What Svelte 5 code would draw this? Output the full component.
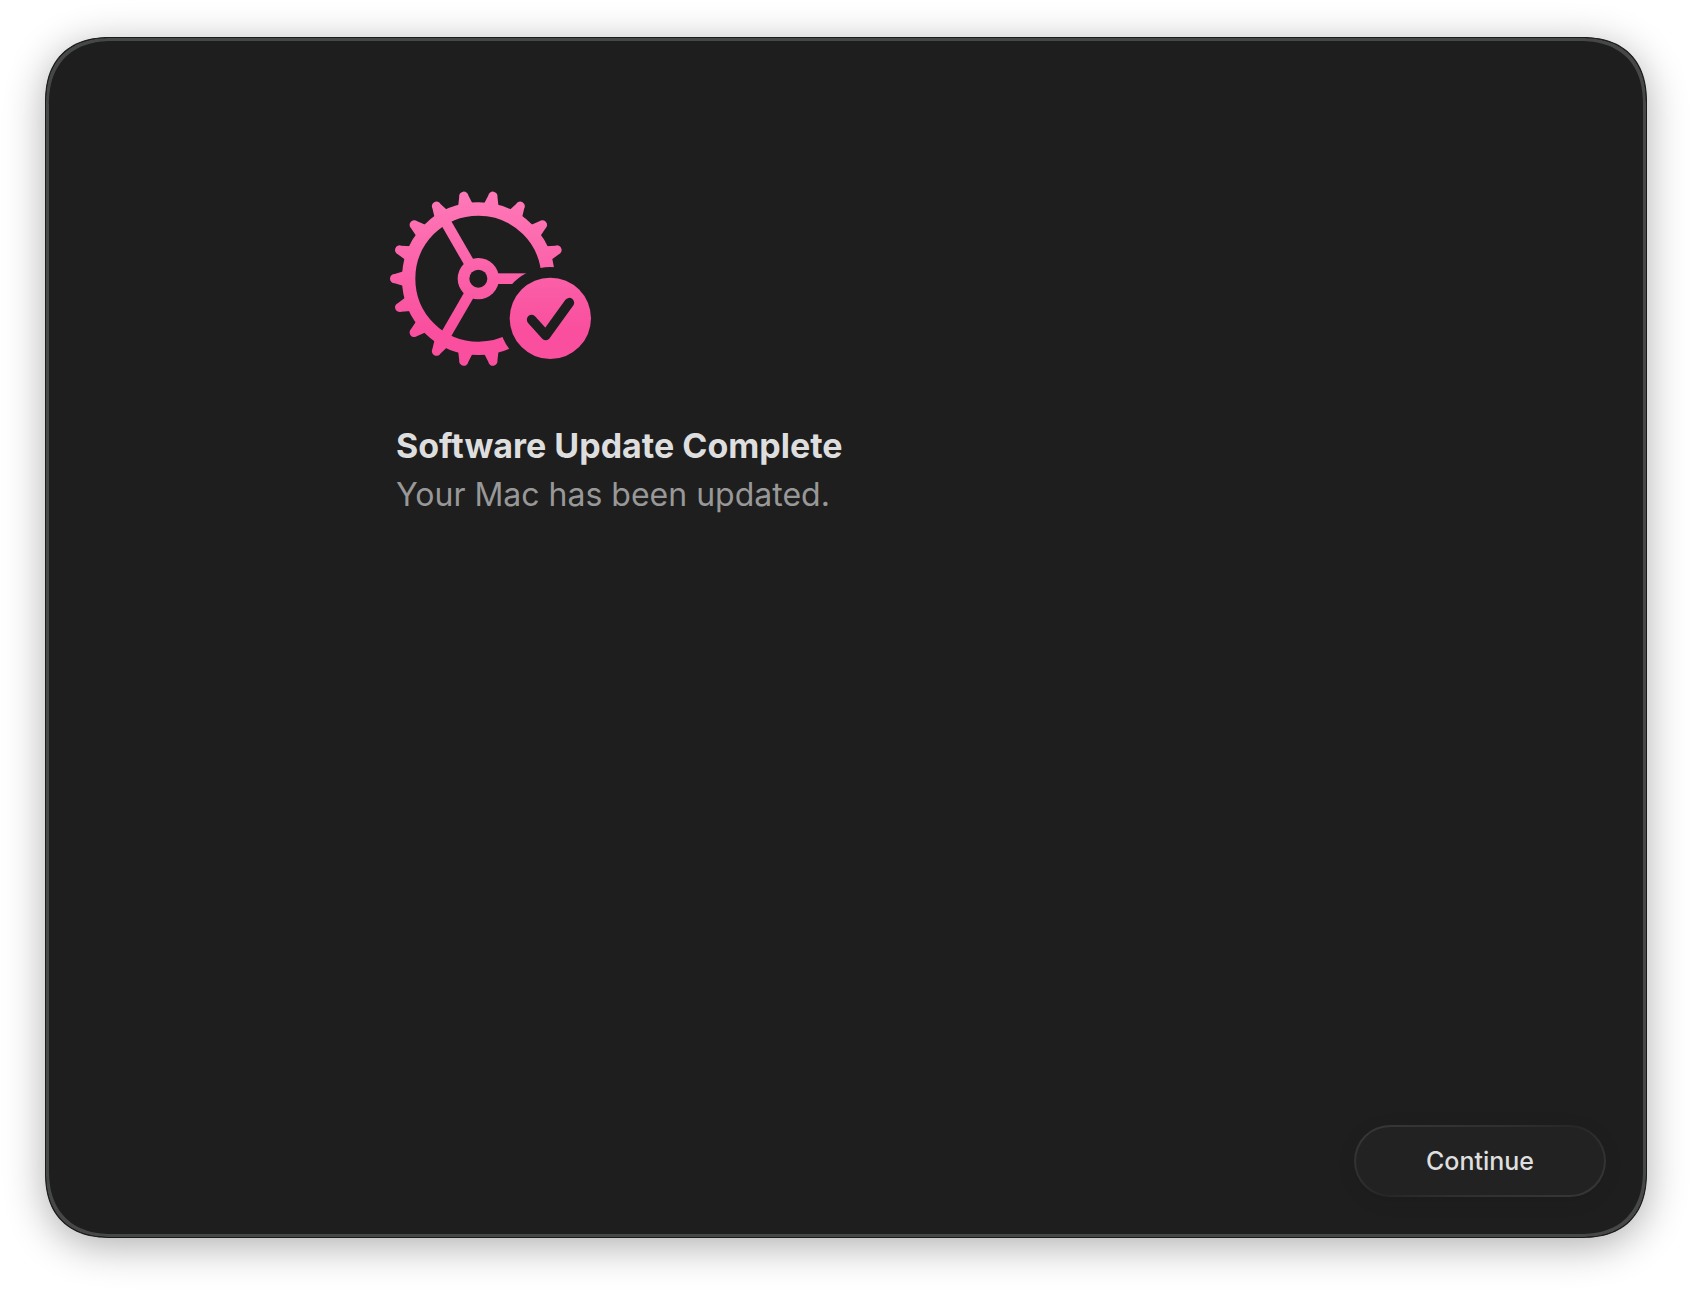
<script lang="ts">
  const teeth = Array.from({ length: 18 }, (_, i) => i * 20);
  const spokes = [0, 120, 240];
</script>

<div class="desktop">
  <main class="window">
    <section class="content">
      <svg class="icon" viewBox="30 30 606 531" aria-hidden="true">
        <defs>
          <linearGradient id="pink" gradientUnits="userSpaceOnUse" x1="0" y1="30" x2="0" y2="450">
            <stop offset="0" stop-color="#ff7ab8" />
            <stop offset="1" stop-color="#f94f9e" />
          </linearGradient>
          <mask id="shape" maskUnits="userSpaceOnUse" x="0" y="0" width="660" height="600">
            <g transform="translate(295 296)" fill="#fff">
              <circle r="209" fill="none" stroke="#fff" stroke-width="40" />
              {#each teeth as angle (angle)}
                <path
                  d="M-218 -25L-227 -22L-254 -14A14 14 0 0 0 -254 14L-227 22L-218 25Z"
                  transform="rotate({angle}) translate(3 0)"
                />
              {/each}
              {#each spokes as angle (angle)}
                <rect x="40" y="-16" width="155" height="32" transform="rotate({angle})" />
              {/each}
              <circle r="62" />
              <circle r="27" fill="#000" />
            </g>
            <circle cx="511" cy="415" r="154" fill="#000" />
            <circle cx="511" cy="415" r="122" fill="#fff" />
            <path
              d="M455 419L497 466L568 368"
              fill="none"
              stroke="#000"
              stroke-width="29"
              stroke-linecap="round"
              stroke-linejoin="round"
            />
          </mask>
        </defs>
        <rect width="660" height="600" fill="url(#pink)" mask="url(#shape)" />
      </svg>
      <h1>Software Update Complete</h1>
      <p>Your Mac has been updated.</p>
    </section>

    <footer>
      <button type="button">Continue</button>
    </footer>
  </main>
</div>

<style>
  :global(body) { margin: 0; background: #fff; }
  .desktop {
    box-sizing: border-box;
    display: flex;
    min-height: 100vh;
    padding: 37px 45px 54px;
    font-family: Inter, "Liberation Sans", sans-serif;
  }
  .window {
    flex: 1;
    display: flex;
    flex-direction: column;
    justify-content: space-between;
    border: 1px solid #1a1a1a;
    border-radius: 56px;
    background: #1e1e1e;
    box-shadow: inset 0 0 0 3px #464747, 0 8px 40px rgba(0, 0, 0, 0.32);
  }
  @supports (corner-shape: superellipse(1.25)) {
    .window { border-radius: 66px; corner-shape: superellipse(1.25); }
  }
  .content { padding: 152px 344px 0 350px; }
  .icon { display: block; width: 202px; height: 177px; margin-left: -6px; overflow: visible; }
  h1, p { margin: 0; line-height: 49px; }
  h1 { margin-top: 54px; font-size: 34px; font-weight: 700; color: #dedede; }
  p { font-size: 32px; color: #989898; }
  footer { display: flex; justify-content: flex-end; padding: 0 40px; margin-bottom: 40px; }
  button {
    width: 252px;
    height: 72px;
    padding: 0;
    border: 2px solid transparent;
    border-radius: 36px;
    background:
      linear-gradient(#222, #222) padding-box,
      linear-gradient(160deg, #383838, #2f2f2f 35%, #272727 50%, #2f2f2f 65%, #383838) border-box;
    box-shadow: 0 4px 20px rgba(0, 0, 0, 0.08);
    color: #dfdfdf;
    font: 500 25px/32px Inter, "Liberation Sans", sans-serif;
    cursor: pointer;
  }
</style>
